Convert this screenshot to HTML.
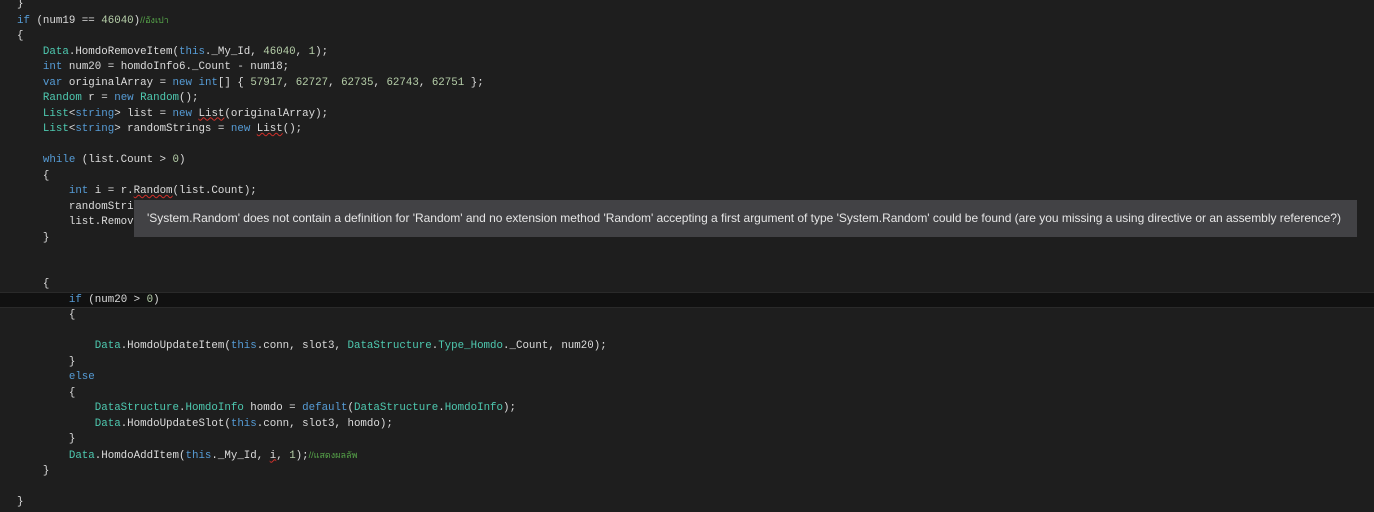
<!DOCTYPE html>
<html><head><meta charset="utf-8"><style>
html,body{margin:0;padding:0;background:#1e1e1e;width:1374px;height:512px;overflow:hidden}
.code{position:absolute;left:17px;top:-3px;font-family:"Liberation Mono",monospace;font-size:10.8px;line-height:15.5px;color:#dcdcdc;white-space:pre}
.k{color:#569cd6}.t{color:#4ec9b0}.n{color:#b5cea8}.c{color:#57a64a;font-family:"Liberation Sans","Noto Sans CJK SC",sans-serif;font-size:9px}
.sq{text-decoration:underline wavy #d0302a;text-decoration-thickness:1px}
.cur{position:absolute;left:0;top:292px;width:1374px;height:14px;background:#111;border-top:1px solid #2a2a2a;border-bottom:1px solid #2a2a2a}
.tip{position:absolute;left:134px;top:200px;width:1223px;height:37px;background:#424245;color:#e6e6e6;font-family:"Liberation Sans",sans-serif;font-size:12px;line-height:37px;padding-left:13px;box-sizing:border-box;white-space:nowrap;letter-spacing:-0.02px}
</style></head><body>
<div class="cur"></div>
<div class="code">}
<span class="k">if</span> (num19 == <span class="n">46040</span>)<span class="c">//อังเปา</span>
{
    <span class="t">Data</span>.HomdoRemoveItem(<span class="k">this</span>._My_Id, <span class="n">46040</span>, <span class="n">1</span>);
    <span class="k">int</span> num20 = homdoInfo6._Count - num18;
    <span class="k">var</span> originalArray = <span class="k">new</span> <span class="k">int</span>[] { <span class="n">57917</span>, <span class="n">62727</span>, <span class="n">62735</span>, <span class="n">62743</span>, <span class="n">62751</span> };
    <span class="t">Random</span> r = <span class="k">new</span> <span class="t">Random</span>();
    <span class="t">List</span>&lt;<span class="k">string</span>&gt; list = <span class="k">new</span> <span class="sq">List</span>(originalArray);
    <span class="t">List</span>&lt;<span class="k">string</span>&gt; randomStrings = <span class="k">new</span> <span class="sq">List</span>();

    <span class="k">while</span> (list.Count &gt; <span class="n">0</span>)
    {
        <span class="k">int</span> i = r.<span class="sq">Random</span>(list.Count);
        randomStrings.Add(list[i]);
        list.RemoveAt(i);
    }


    {
        <span class="k">if</span> (num20 &gt; <span class="n">0</span>)
        {

            <span class="t">Data</span>.HomdoUpdateItem(<span class="k">this</span>.conn, slot3, <span class="t">DataStructure</span>.<span class="t">Type_Homdo</span>._Count, num20);
        }
        <span class="k">else</span>
        {
            <span class="t">DataStructure</span>.<span class="t">HomdoInfo</span> homdo = <span class="k">default</span>(<span class="t">DataStructure</span>.<span class="t">HomdoInfo</span>);
            <span class="t">Data</span>.HomdoUpdateSlot(<span class="k">this</span>.conn, slot3, homdo);
        }
        <span class="t">Data</span>.HomdoAddItem(<span class="k">this</span>._My_Id, <span class="sq">i</span>, <span class="n">1</span>);<span class="c">//แสดงผลลัพ</span>
    }

}</div>
<div class="tip">'System.Random' does not contain a definition for 'Random' and no extension method 'Random' accepting a first argument of type 'System.Random' could be found (are you missing a using directive or an assembly reference?)</div>
</body></html>
